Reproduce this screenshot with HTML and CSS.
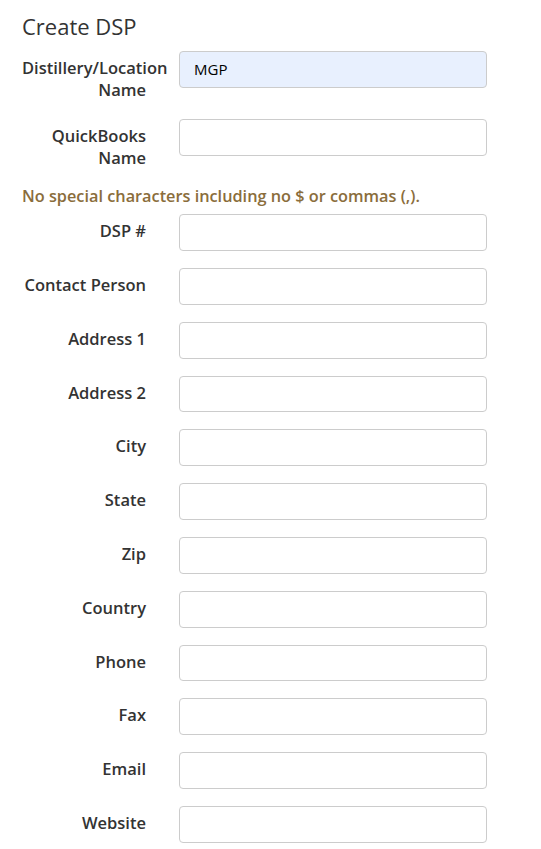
FILE: index.html
```html
<!DOCTYPE html>
<html>
<head>
<meta charset="utf-8">
<link rel="stylesheet" href="styles.css">
</head>
<body>
<div class="page">
  <h1 class="title">Create DSP</h1>
  <form class="form">
    <div class="row">
      <label class="label">Distillery/Location Name</label>
      <input class="input filled" type="text" value="MGP">
    </div>
    <div class="row row-note">
      <label class="label">QuickBooks Name</label>
      <input class="input" type="text">
    </div>
    <p class="note">No special characters including no $ or commas (,).</p>
    <div class="row"><label class="label">DSP #</label><input class="input" type="text"></div>
    <div class="row"><label class="label">Contact Person</label><input class="input" type="text"></div>
    <div class="row"><label class="label">Address 1</label><input class="input" type="text"></div>
    <div class="row"><label class="label">Address 2</label><input class="input" type="text"></div>
    <div class="row"><label class="label">City</label><input class="input" type="text"></div>
    <div class="row"><label class="label">State</label><input class="input" type="text"></div>
    <div class="row"><label class="label">Zip</label><input class="input" type="text"></div>
    <div class="row"><label class="label">Country</label><input class="input" type="text"></div>
    <div class="row"><label class="label">Phone</label><input class="input" type="text"></div>
    <div class="row"><label class="label">Fax</label><input class="input" type="text"></div>
    <div class="row"><label class="label">Email</label><input class="input" type="text"></div>
    <div class="row"><label class="label">Website</label><input class="input" type="text"></div>
  </form>
</div>
</body>
</html>
```
FILE: styles.css
```css
html, body {
  margin: 0;
  padding: 0;
  background: #fff;
}
body {
  font-family: "Open Sans", "DejaVu Sans", sans-serif;
  color: #333;
}
.page {
  padding: 12.5px 0 0 22px;
}
.title {
  margin: 0 0 12.5px 0;
  font-size: 22px;
  line-height: 26px;
  font-weight: 400;
  color: #333;
}
.row {
  display: grid;
  grid-template-columns: 124px 308px;
  column-gap: 33px;
  align-items: start;
  margin-bottom: 17px;
}
.row-note {
  margin-bottom: 15px;
}
.label {
  padding: 6px 0 1px 0;
  font-size: 16.5px;
  line-height: 22px;
  font-weight: 600;
  text-align: right;
  color: #333;
}
.input {
  box-sizing: border-box;
  height: 36.8px;
  width: 308px;
  margin: 0;
  padding: 0 14px;
  border: 1px solid #ccc;
  border-radius: 4px;
  background: #fff;
  font-family: "Open Sans", "DejaVu Sans", sans-serif;
  font-size: 15px;
  color: #000;
}
.input.filled {
  background: #e8f0fe;
}
.note {
  margin: 0 0 7.2px 0;
  font-size: 16.3px;
  line-height: 22px;
  font-weight: 600;
  color: #8a6d3b;
}
```
